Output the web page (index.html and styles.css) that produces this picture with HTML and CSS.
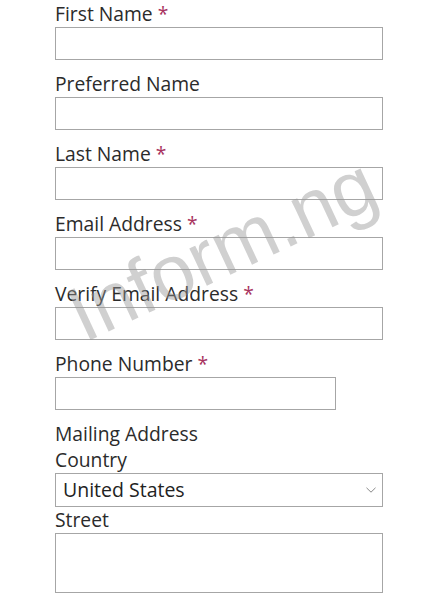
FILE: index.html
```html
<!DOCTYPE html>
<html lang="en">
<head>
<meta charset="utf-8">
<title>Form</title>
<link rel="stylesheet" href="styles.css">
</head>
<body>
<form class="form">
  <div class="field">
    <label class="label">First Name <span class="req">*</span></label>
    <div class="input"></div>
  </div>
  <div class="field">
    <label class="label">Preferred Name</label>
    <div class="input"></div>
  </div>
  <div class="field">
    <label class="label">Last Name <span class="req">*</span></label>
    <div class="input"></div>
  </div>
  <div class="field">
    <label class="label">Email Address <span class="req">*</span></label>
    <div class="input"></div>
  </div>
  <div class="field">
    <label class="label">Verify Email Address <span class="req">*</span></label>
    <div class="input"></div>
  </div>
  <div class="field">
    <label class="label">Phone Number <span class="req">*</span></label>
    <div class="input input-short"></div>
  </div>
  <div class="group">
    <div class="label">Mailing Address</div>
    <label class="label">Country</label>
    <div class="select">
      <span class="select-text">United States</span>
      <svg class="chev" width="10" height="6" viewBox="0 0 10 6"><path d="M0.5 0.8 L5 5.2 L9.5 0.8" fill="none" stroke="#888" stroke-width="1"/></svg>
    </div>
    <label class="label">Street</label>
    <div class="textarea"></div>
  </div>
</form>
<div class="watermark">Inform.ng</div>
</body>
</html>
```
FILE: styles.css
```css
html, body {
  margin: 0;
  padding: 0;
  background: #ffffff;
}
body {
  font-family: "Open Sans", "Noto Sans", sans-serif;
  color: #2a2a2a;
  position: relative;
  width: 438px;
  height: 600px;
  overflow: hidden;
}
.form {
  display: flex;
  flex-direction: column;
  padding: 1px 0 0 55px;
  width: 328px;
}
.field {
  display: flex;
  flex-direction: column;
  margin-bottom: 11px;
}
.label {
  display: block;
  font-size: 19.3px;
  line-height: 26px;
  height: 26px;
  color: #2b2b2b;
}
.req {
  color: #a8335e;
}
.input {
  box-sizing: border-box;
  height: 33px;
  width: 328px;
  border: 1.5px solid #a6a6a6;
  background: #fff;
}
.input-short {
  width: 281px;
}
.group {
  display: flex;
  flex-direction: column;
}
.select {
  box-sizing: border-box;
  height: 34px;
  width: 328px;
  border: 1.5px solid #a6a6a6;
  display: flex;
  align-items: center;
  justify-content: space-between;
  padding: 0 6px 0 7px;
}
.select-text {
  font-size: 19.5px;
  color: #222;
  line-height: 30px;
}
.chev {
  display: block;
}
.textarea {
  box-sizing: border-box;
  height: 60px;
  width: 328px;
  border: 1.5px solid #a6a6a6;
}
.watermark {
  position: absolute;
  left: 84px;
  top: 277px;
  font-family: "Liberation Sans", Arial, sans-serif;
  font-size: 78px;
  line-height: 78px;
  color: rgba(150, 150, 150, 0.45);
  transform: rotate(-25deg);
  transform-origin: 0 66px;
  white-space: nowrap;
  pointer-events: none;
}
```
